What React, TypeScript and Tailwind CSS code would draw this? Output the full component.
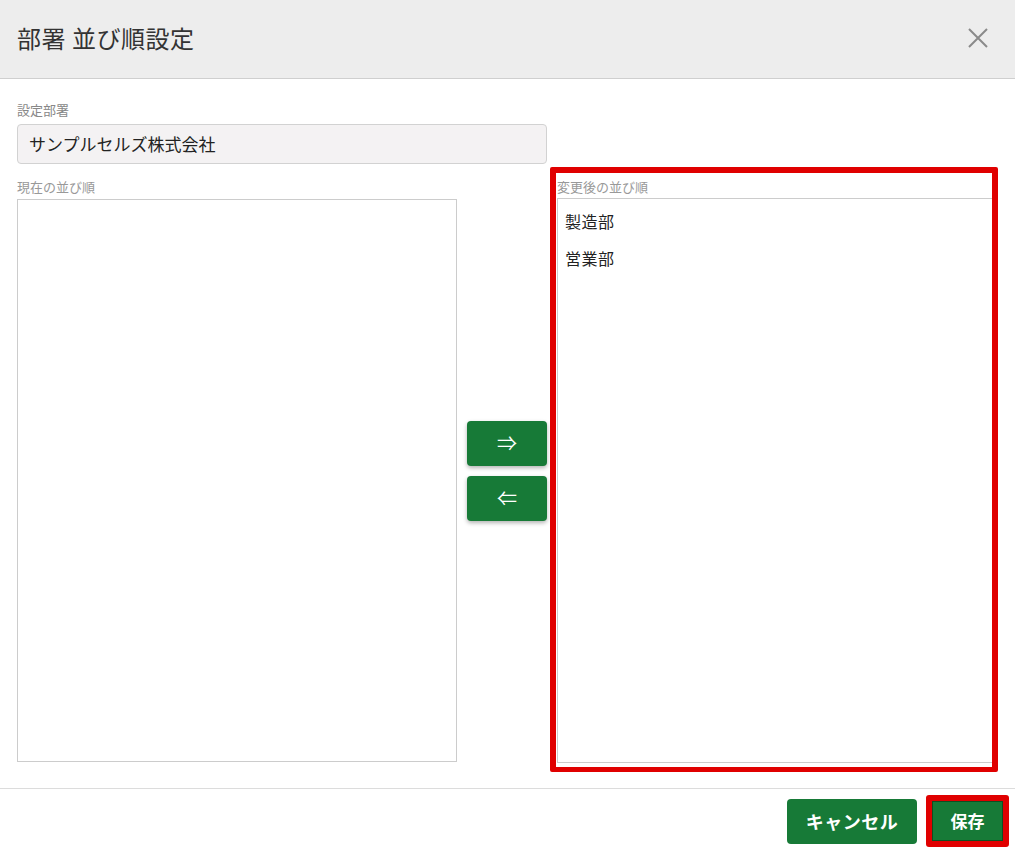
import React from "react";

export default function App() {
  const after = ["製造部", "営業部"];

  return (
    <div
      className="w-[1015px] h-[851px] bg-white text-[#333] flex flex-col overflow-hidden"
      style={{ fontFamily: '"Noto Sans CJK JP", "Noto Sans", sans-serif' }}
    >
      {/* header */}
      <div className="h-[79px] shrink-0 bg-[#ededed] border-b border-[#cfcfcf] flex items-center justify-between pl-[17px] pr-[26px]">
        <h1 className="text-[24px] tracking-[0.5px] text-[#333] font-normal pb-[2px]">部署 並び順設定</h1>
        <svg width="22" height="22" viewBox="0 0 22 22" className="mt-[-2px]">
          <path d="M2 2 L20 20 M20 2 L2 20" stroke="#8a8a8a" strokeWidth="2" />
        </svg>
      </div>

      {/* body */}
      <div className="flex-1 flex px-[17px] pt-[22px]">
        <div className="w-[530px] flex flex-col">
          <div className="h-[18px] leading-[18px] text-[13px] text-[#888] mb-[5px]">設定部署</div>
          <div className="h-[40px] bg-[#f4f2f3] border border-[#d2d2d2] rounded-[4px] flex items-center px-[11px] text-[17px] text-[#222]">
            サンプルセルズ株式会社
          </div>
          <div className="h-[18px] leading-[18px] text-[13px] text-[#999] mt-[14px] mb-[3px]">現在の並び順</div>
          <div className="flex">
            <div className="w-[440px] h-[563px] border border-[#cccccc]"></div>
            <div className="ml-[10px] w-[80px] flex flex-col justify-center gap-[10px] pb-[20px]">
              <button className="h-[45px] rounded-[4px] bg-[#177a37] text-white text-[20px] shadow-[0_2px_4px_rgba(0,0,0,0.3)]">
                ⇒
              </button>
              <button className="h-[45px] rounded-[4px] bg-[#177a37] text-white text-[20px] shadow-[0_2px_4px_rgba(0,0,0,0.3)]">
                ⇐
              </button>
            </div>
          </div>
        </div>

        {/* right column with red annotation */}
        <div className="ml-[3px] mt-[66px] w-[450px] h-[605px] border-[6px] border-b-[5px] border-[#e00000] rounded-[2px] flex flex-col pl-[1px]">
          <div className="h-[20px] leading-[18px] text-[13px] text-[#999] pt-[5px] box-content">変更後の並び順</div>
          <div className="flex-1 border border-[#cccccc] border-r-0 mb-[4px] pt-[10px] px-[7px]">
            {after.map((d) => (
              <div key={d} className="h-[37px] text-[16px] tracking-[0.5px] text-[#222] leading-[24px]">
                {d}
              </div>
            ))}
          </div>
        </div>
      </div>

      {/* footer */}
      <div className="h-[63px] shrink-0 border-t border-[#dcdcdc] flex items-center justify-end gap-[9px] pr-[6px] pt-[2px]">
        <button className="w-[130px] h-[45px] rounded-[4px] bg-[#177a37] text-white text-[18px] tracking-[0.5px] font-bold">
          キャンセル
        </button>
        <div className="border-[6px] border-[#e00000] rounded-[3px]">
          <button className="w-[71px] h-[40px] bg-[#177a37] text-white text-[17px] font-bold block border border-[#0e4f22]">
            保存
          </button>
        </div>
      </div>
    </div>
  );
}
